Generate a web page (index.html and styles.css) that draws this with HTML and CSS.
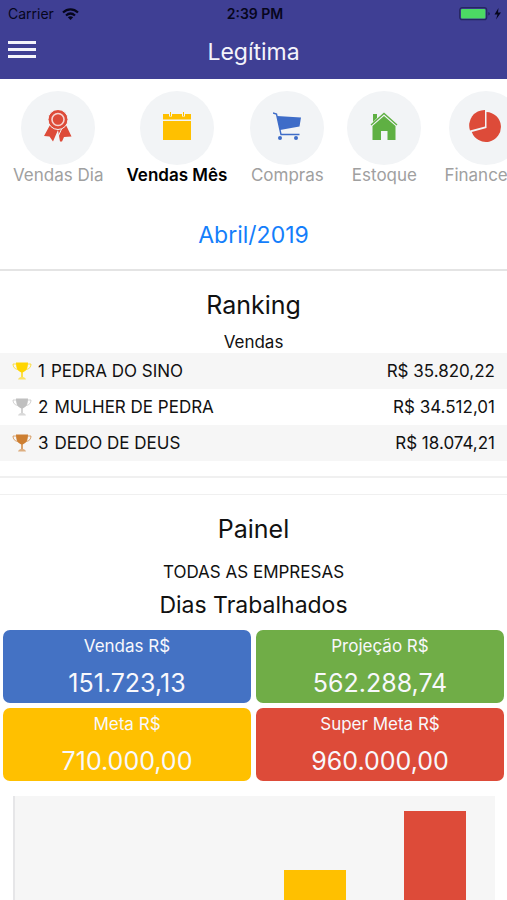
FILE: index.html
```html
<!DOCTYPE html>
<html lang="pt-BR">
    <head>
        <meta charset="utf-8">
        <meta name="viewport" content="width=device-width, initial-scale=1">
        <title>Legítima</title>
        <link rel="stylesheet" href="styles.css">
    </head>
    <body>
        <!-- Trophy used in the ranking rows -->
        <svg class="symbols" aria-hidden="true">
            <symbol id="trophy" viewBox="0 0 20 18">
                <path d="M4 0.500H16C16 6 14.500 9 10.700 10.500V15H9.300V10.500C5.500 9 4 6 4 0.500Z" fill="currentColor"/>
                <path d="M4 2H1C1 5 2.500 7 6 7.500M16 2H19C19 5 17.500 7 14 7.500" fill="none" stroke="currentColor" opacity="0.7"/>
                <path d="M6 17.500C6.500 15.500 8.500 15 10 15S13.500 15.500 14 17.500Z" fill="currentColor" opacity="0.6"/>
            </symbol>
        </svg>

        <div class="app">
            <header class="header">
                <div class="status">
                    <div class="status-left">
                        <span>Carrier</span>
                        <svg width="17" height="12" viewBox="0 0 17 12" fill="none" stroke="#06061c" stroke-width="2.2">
                            <path d="M1 4.500C5.500 0.300 11.500 0.300 16 4.500"/>
                            <path d="M4 7.500C6.800 5 10.200 5 13 7.500"/>
                            <path d="M8.500 12L5.800 9.300C7.400 7.900 9.600 7.900 11.200 9.300Z" fill="#06061c" stroke="none"/>
                        </svg>
                    </div>
                    <span class="status-time">2:39 PM</span>
                    <div class="status-right">
                        <svg width="43" height="14" viewBox="0 0 43 14">
                            <rect x="0.700" y="0.700" width="27" height="12" rx="2.500" fill="none" stroke="#26265f" stroke-width="1.200"/>
                            <rect x="2" y="2" width="24.400" height="9.400" rx="1" fill="#4cd964"/>
                            <path d="M29.500 5C31 5.500 31 8 29.500 8.500Z" fill="#16164a"/>
                            <path d="M39.500 1L35.500 7.500H38.500L37 12.500L42 5.500H39Z" fill="#06061c"/>
                        </svg>
                    </div>
                </div>
                <div class="title-bar">
                    <button class="menu-button" type="button" aria-label="Menu">
                        <span></span>
                        <span></span>
                        <span></span>
                    </button>
                    <h1>Legítima</h1>
                </div>
            </header>

            <main class="content">
                <section class="card">
                    <nav class="tabs">
                        <a class="tab" href="#dia">
                            <span class="tab-icon">
                                <svg width="28" height="32" viewBox="0 0 28 32" fill="#dd4b39">
                                    <path d="M6 15L0 26L5.500 26.500L9 31.500L14 20L16 31.500L18 31.500L20 27L27.500 26.500L22 15Z"/>
                                    <path d="M18 18L13.500 28" stroke="#f2f4f6" stroke-width="1"/>
                                    <circle cx="14" cy="9.500" r="10" stroke="#f2f4f6" stroke-width="1"/>
                                    <circle cx="14" cy="9.500" r="6" fill="none" stroke="#f6d5d2" stroke-width="1.600"/>
                                </svg>
                            </span>
                            <span>Vendas Dia</span>
                        </a>
                        <a class="tab active" href="#mes">
                            <span class="tab-icon">
                                <svg width="28" height="28" viewBox="0 0 28 28" fill="#ffc000">
                                    <path d="M0 2H28V7.500H0ZM0 9H28V28H0Z"/>
                                    <path d="M7.500 0V4.500M20.500 0V4.500" stroke="#f2f4f6" stroke-width="3"/>
                                    <path d="M7.500 0V4M20.500 0V4" stroke="#ffc000" stroke-width="1"/>
                                </svg>
                            </span>
                            <span>Vendas Mês</span>
                        </a>
                        <a class="tab" href="#compras">
                            <span class="tab-icon">
                                <svg width="28" height="28" viewBox="0 0 28 28" fill="#3e6cc8">
                                    <path d="M4 4L28 5.500L26.500 14.500L7 18Z"/>
                                    <path d="M0 1L3.500 2L8 22.500H26.500" fill="none" stroke="#3e6cc8" stroke-width="1.400"/>
                                    <circle cx="7" cy="26" r="2"/>
                                    <circle cx="23" cy="26" r="2"/>
                                </svg>
                            </span>
                            <span>Compras</span>
                        </a>
                        <a class="tab" href="#estoque">
                            <span class="tab-icon">
                                <svg width="28" height="28" viewBox="0 0 28 28" fill="#5fb043">
                                    <path d="M3 2H7V6L3 10Z"/>
                                    <path d="M1 13L14 1.500L27 13" fill="none" stroke="#5fb043" stroke-width="1.400"/>
                                    <path d="M14 4L25.500 14V28H17.500V19H11V28H2.500V14Z"/>
                                </svg>
                            </span>
                            <span>Estoque</span>
                        </a>
                        <a class="tab" href="#financeiro">
                            <span class="tab-icon">
                                <svg width="34" height="34" viewBox="0 0 34 34" fill="#dd4b39">
                                    <path d="M16 1A15.500 15.500 0 0 0 1 21.500L16 17.500Z"/>
                                    <path d="M17.500 3A15 15 0 1 1 2.800 23L17.500 19Z"/>
                                </svg>
                            </span>
                            <span>Financeiro</span>
                        </a>
                    </nav>
                    <button class="period" type="button">Abril/2019</button>
                </section>

                <section class="card ranking">
                    <h2>Ranking</h2>
                    <table>
                        <caption>Vendas</caption>
                        <tbody>
                            <tr>
                                <td>
                                    <div class="place">
                                        <svg class="gold" width="20" height="18"><use href="#trophy"/></svg>
                                        <span>1</span>
                                        <span>PEDRA DO SINO</span>
                                    </div>
                                </td>
                                <td class="amount">R$ 35.820,22</td>
                            </tr>
                            <tr>
                                <td>
                                    <div class="place">
                                        <svg class="silver" width="20" height="18"><use href="#trophy"/></svg>
                                        <span>2</span>
                                        <span>MULHER DE PEDRA</span>
                                    </div>
                                </td>
                                <td class="amount">R$ 34.512,01</td>
                            </tr>
                            <tr>
                                <td>
                                    <div class="place">
                                        <svg class="bronze" width="20" height="18"><use href="#trophy"/></svg>
                                        <span>3</span>
                                        <span>DEDO DE DEUS</span>
                                    </div>
                                </td>
                                <td class="amount">R$ 18.074,21</td>
                            </tr>
                        </tbody>
                    </table>
                </section>

                <section class="card panel">
                    <h2>Painel</h2>
                    <p class="company">TODAS AS EMPRESAS</p>
                    <h3>Dias Trabalhados</h3>
                    <div class="tiles">
                        <div class="tile blue">
                            <span>Vendas R$</span>
                            <strong>151.723,13</strong>
                        </div>
                        <div class="tile green">
                            <span>Projeção R$</span>
                            <strong>562.288,74</strong>
                        </div>
                        <div class="tile yellow">
                            <span>Meta R$</span>
                            <strong>710.000,00</strong>
                        </div>
                        <div class="tile red">
                            <span>Super Meta R$</span>
                            <strong>960.000,00</strong>
                        </div>
                    </div>
                    <!-- bar heights are value / 1.024.000 -->
                    <div class="chart">
                        <div class="slot"><div class="bar blue" style="height: 14.8%"></div></div>
                        <div class="slot"><div class="bar green" style="height: 54.9%"></div></div>
                        <div class="slot"><div class="bar yellow" style="height: 69.3%"></div></div>
                        <div class="slot"><div class="bar red" style="height: 93.8%"></div></div>
                    </div>
                </section>
            </main>
        </div>
    </body>
</html>
```

FILE: styles.css
```css
* {
    box-sizing: border-box;
}

body {
    margin: 0;
    background-color: #fff;
    color: #111;
    font-family: Inter, "Liberation Sans", sans-serif;
    font-size: 17px;
    line-height: 20px;
}

button {
    border: 0;
    padding: 0;
    background: none;
    font-family: inherit;
    cursor: pointer;
}

h1, h2, h3, p {
    margin: 0;
    font-weight: 400;
}

.symbols {
    display: none;
}

.app {
    display: flex;
    flex-direction: column;
    height: 100vh;
}

/* Header */
.header {
    padding-bottom: 2px;
    background-color: #3f3f94;
}

.status {
    display: grid;
    grid-template-columns: 1fr auto 1fr;
    align-items: center;
    height: 27px;
    padding: 0 5px 0 8px;
    color: #06061c;
    font-size: 14px;
}

.status-left {
    display: flex;
    align-items: center;
    gap: 8px;
}

.status-time {
    font-weight: 600;
}

.status-right {
    display: flex;
    justify-content: flex-end;
}

.title-bar {
    display: grid;
    grid-template-columns: 1fr auto 1fr;
    align-items: center;
    height: 50px;
    padding: 0 8px;
}

.title-bar h1 {
    color: #f4f4fb;
    font-size: 23px;
    line-height: 32px;
}

.menu-button {
    display: flex;
    flex-direction: column;
    gap: 4px;
    width: 28px;
    padding-bottom: 6px;
}

.menu-button span {
    height: 3px;
    background-color: #f4f4fb;
}

/* Content */
.content {
    flex: 1;
    min-height: 0;
    overflow-y: auto;
    scrollbar-width: none;
}

.card {
    border-bottom: 2px solid #e4e4e4;
}

.card h2 {
    font-size: 25px;
    line-height: 32px;
    text-align: center;
}

.tabs {
    display: flex;
    gap: 23px;
    padding: 12px 13px 0;
    overflow-x: auto;
    scrollbar-width: none;
}

.tab {
    display: flex;
    flex-direction: column;
    align-items: center;
    flex-shrink: 0;
    color: #a0a0a0;
    text-decoration: none;
}

.tab.active {
    color: #000;
    font-weight: 600;
}

.tab-icon {
    display: flex;
    align-items: center;
    justify-content: center;
    width: 74px;
    height: 74px;
    padding-bottom: 4px;
    border-radius: 50%;
    background-color: #f2f4f6;
}

.period {
    display: block;
    margin: 34px auto 18px;
    color: #147efb;
    font-size: 23px;
    line-height: 32px;
}

/* Ranking */
.ranking {
    padding: 18px 0 15px;
    border-bottom-color: #f0f0f0;
}

.ranking table {
    width: 100%;
    margin-top: 10px;
    border-collapse: collapse;
}

.ranking caption {
    line-height: 22px;
}

.ranking td {
    height: 36px;
    padding: 0 12px;
}

.ranking tr:nth-child(odd) {
    background-color: #f6f6f6;
}

.place {
    display: flex;
    align-items: center;
    gap: 6px;
}

.amount {
    text-align: right;
}

.gold {
    color: #ffd500;
}

.silver {
    color: #c0c0c0;
}

.bronze {
    color: #cd7f32;
}

/* Panel */
.panel {
    margin-top: 16px;
    padding: 18px 3px 16px;
    border-top: 1px solid #f0f0f0;
    text-align: center;
}

.company {
    margin: 17px 0 7px;
}

.panel h3 {
    font-size: 23px;
    line-height: 32px;
}

.tiles {
    display: grid;
    grid-template-columns: 1fr 1fr;
    gap: 5px;
    margin-top: 9px;
}

.tile {
    display: flex;
    flex-direction: column;
    gap: 11px;
    padding: 6px 0 4px;
    border-radius: 7px;
    color: #f8f8fc;
}

.tile strong {
    font-size: 25px;
    font-weight: 400;
    line-height: 32px;
}

.blue {
    background-color: #4472c4;
}

.green {
    background-color: #70ad47;
}

.yellow {
    background-color: #ffc000;
}

.red {
    background-color: #dd4b39;
}

.chart {
    display: flex;
    height: 242px;
    margin: 15px 9px 0 10px;
    border-left: 2px solid #e6e6e8;
    background-color: #f6f6f6;
}

.slot {
    display: flex;
    flex: 1;
    align-items: flex-end;
    justify-content: center;
}

.bar {
    width: 51%;
}
```
